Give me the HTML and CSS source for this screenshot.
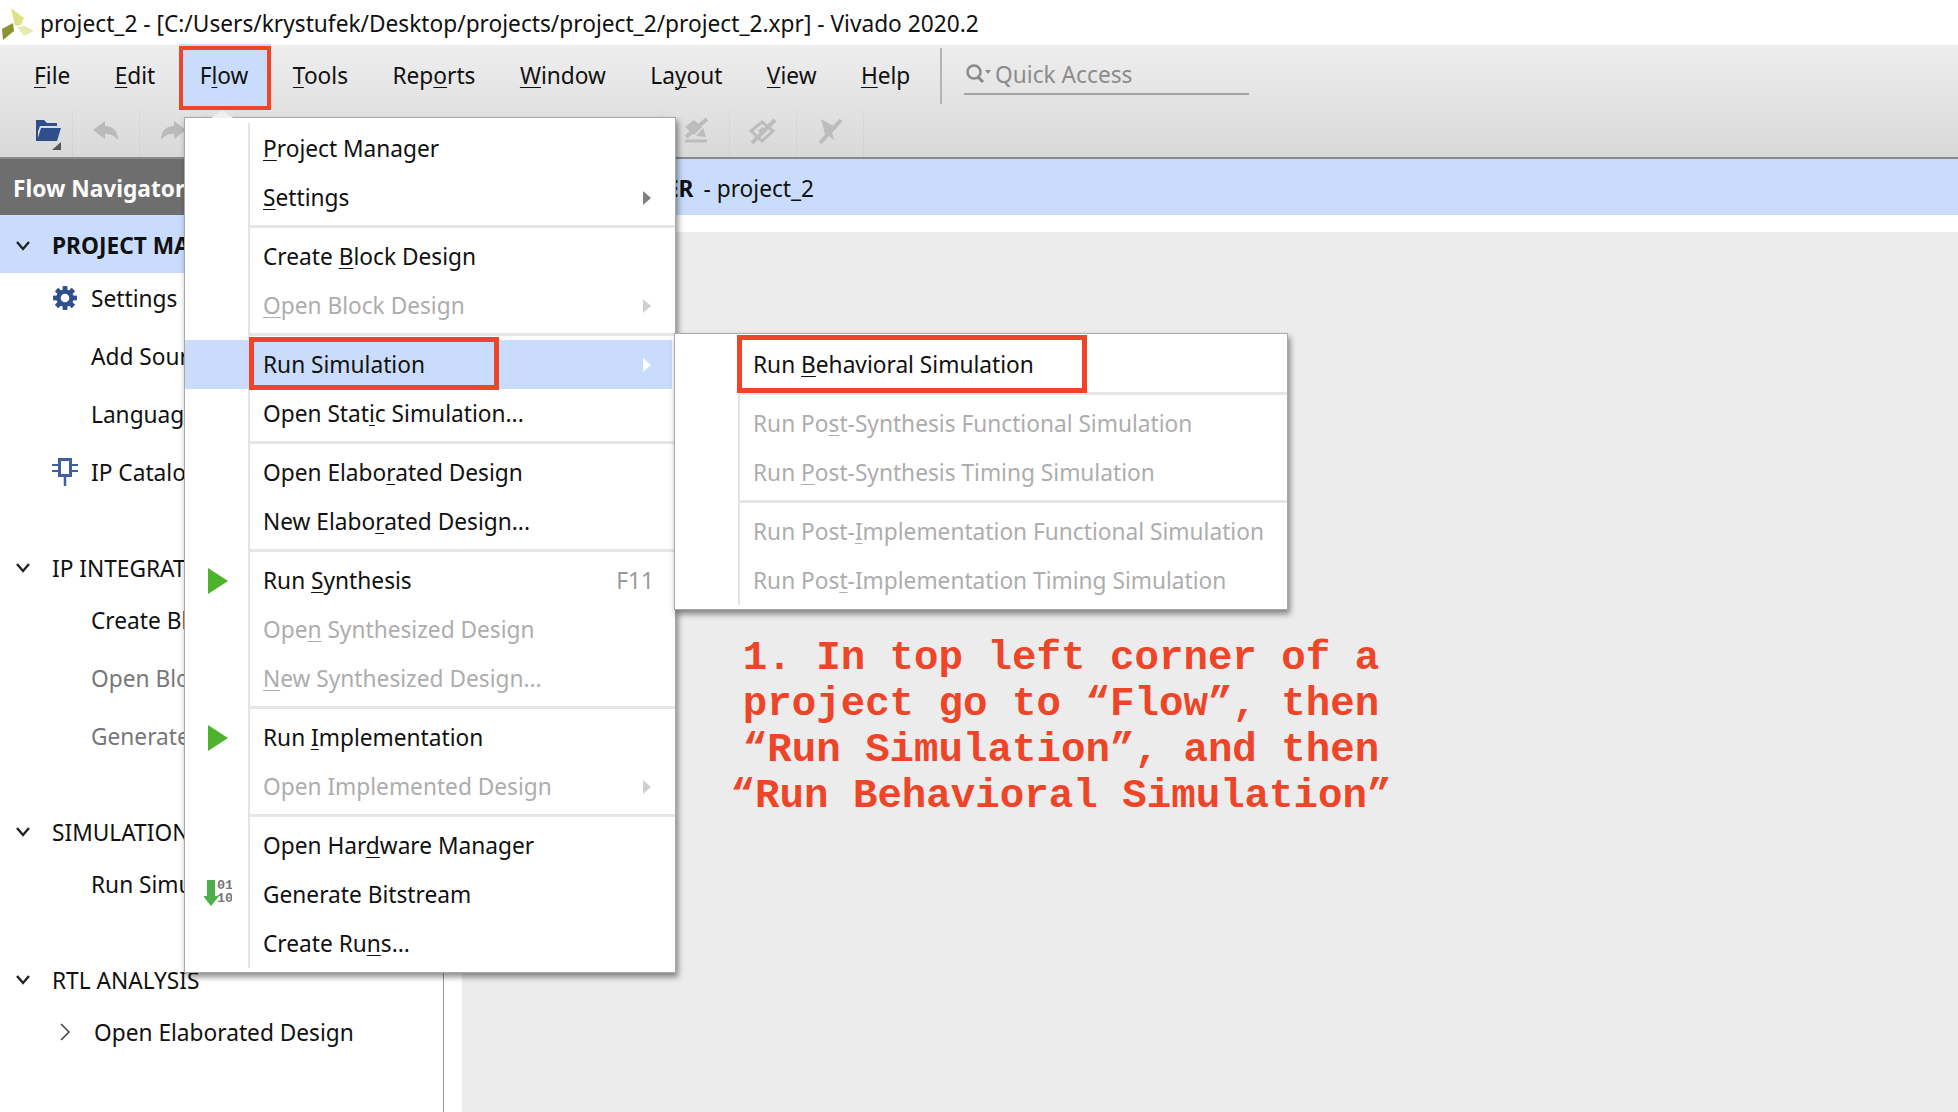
FILE: index.html
```html
<!DOCTYPE html>
<html lang="en">
<head>
<meta charset="UTF-8">
<title>Vivado</title>
<link rel="stylesheet" href="styles.css">
</head>
<body>

<div class="titlebar">
  <svg class="logo" width="34" height="40" viewBox="0 0 34 40">
    <path d="M11 5 L24 15 L21 22 L15 23 Z" fill="#dfe186"/>
    <path d="M2 26 L13 20 L14 28 L3 37 Z" fill="#8d9230"/>
    <path d="M17 24 L25 23 L34 28 L24 33 Z" fill="#e7eaae"/>
  </svg>
  <span>project_2 - [C:/Users/krystufek/Desktop/projects/project_2/project_2.xpr] - Vivado 2020.2</span>
</div>

<div class="chrome">
  <div class="menubar">
    <span class="menu-item"><u>F</u>ile</span>
    <span class="menu-item"><u>E</u>dit</span>
    <span class="menu-item active">F<u>l</u>ow</span>
    <span class="menu-item"><u>T</u>ools</span>
    <span class="menu-item">Rep<u>o</u>rts</span>
    <span class="menu-item"><u>W</u>indow</span>
    <span class="menu-item">La<u>y</u>out</span>
    <span class="menu-item"><u>V</u>iew</span>
    <span class="menu-item"><u>H</u>elp</span>
    <span class="menu-sep"></span>
    <div class="quick">
      <svg width="30" height="24" viewBox="0 0 30 24">
        <circle cx="10" cy="10" r="6.5" fill="none" stroke="#8a8a8a" stroke-width="2.5"/>
        <path d="M14 15 L19 20" stroke="#8a8a8a" stroke-width="3"/>
        <path d="M21 8 H27 L24 12 Z" fill="#8a8a8a"/>
      </svg>
      <span>Quick Access</span>
    </div>
  </div>
  <div class="toolbar">
    <div class="tool tool-first">
      <svg width="30" height="34" viewBox="0 0 30 34">
        <path d="M3 3 H11 L14 6 H24 V9 H7 L3 20 Z" fill="#2f4f8c"/>
        <path d="M3 3 V24 H5 V3 Z" fill="#2f4f8c"/>
        <path d="M8 11 H28 L24 24 H4 Z" fill="#2f4f8c"/>
        <path d="M28 33 V25 L19 33 Z" fill="#555"/>
      </svg>
    </div>
    <div class="tool">
      <svg width="28" height="24" viewBox="0 0 28 24">
        <path d="M1 11 L13 2 V7 C21 7 26 12 26 21 C22 16 19 15 13 15 V20 Z" fill="#bababa"/>
      </svg>
    </div>
    <div class="tool">
      <svg width="28" height="24" viewBox="0 0 28 24">
        <path d="M27 11 L15 2 V7 C7 7 2 12 2 21 C6 16 9 15 15 15 V20 Z" fill="#bababa"/>
      </svg>
    </div>
    <div class="tool-gap"></div>
    <div class="tool">
      <svg width="28" height="28" viewBox="0 0 28 28">
        <path d="M3 10 L12 3 L20 10 L12 18 Z" fill="#bcbcbc"/>
        <path d="M4 20 L25 2" stroke="#bcbcbc" stroke-width="4"/>
        <path d="M14 19 L21 11 L24 20 Z" fill="#bcbcbc"/>
        <path d="M3 24 H25" stroke="#bcbcbc" stroke-width="3"/>
      </svg>
    </div>
    <div class="tool">
      <svg width="28" height="28" viewBox="0 0 28 28">
        <path d="M2 14 L13 5 L24 14 L13 24 Z" fill="none" stroke="#bcbcbc" stroke-width="3"/>
        <path d="M3 26 L26 3" stroke="#bcbcbc" stroke-width="4"/>
        <path d="M9 14 L13 10 L18 14 L13 18 Z" fill="#bcbcbc"/>
      </svg>
    </div>
    <div class="tool">
      <svg width="28" height="28" viewBox="0 0 28 28">
        <path d="M5 2 L21 11 L16 15 L18 23 L13 19 L9 17 Z" fill="#bcbcbc"/>
        <path d="M4 26 L25 3" stroke="#bcbcbc" stroke-width="4"/>
      </svg>
    </div>
  </div>
</div>

<div class="workspace">
  <div class="sidebar">
    <div class="nav">
      <div class="nav-title">Flow Navigator</div>

      <div class="section">
        <div class="section-head current">
          <svg class="chev" width="16" height="10" viewBox="0 0 16 10"><path d="M2 1 L8 8 L14 1" fill="none" stroke="#222" stroke-width="2.4"/></svg>
          <span>PROJECT MANAGER</span>
        </div>
        <div class="nav-item">
          <span class="nav-icon">
            <svg width="26" height="26" viewBox="0 0 24 24">
              <g stroke="#2f4f8c" stroke-width="4.4">
                <path d="M12 1 V23"/><path d="M1 12 H23"/><path d="M4.2 4.2 L19.8 19.8"/><path d="M4.2 19.8 L19.8 4.2"/>
              </g>
              <circle cx="12" cy="12" r="8" fill="#2f4f8c"/>
              <circle cx="12" cy="12" r="4" fill="#fff"/>
            </svg>
          </span>
          <span>Settings</span>
        </div>
        <div class="nav-item"><span class="nav-icon"></span><span>Add Sources</span></div>
        <div class="nav-item"><span class="nav-icon"></span><span>Language Templates</span></div>
        <div class="nav-item">
          <span class="nav-icon">
            <svg width="26" height="28" viewBox="0 0 26 28">
              <rect x="7.5" y="1.5" width="11" height="16" fill="none" stroke="#3f5f9f" stroke-width="3"/>
              <path d="M0 7 H6 M0 13 H6 M20 7 H26 M20 13 H26" stroke="#3f5f9f" stroke-width="2"/>
              <path d="M13 19 V28" stroke="#3f5f9f" stroke-width="2.5"/>
            </svg>
          </span>
          <span>IP Catalog</span>
        </div>
      </div>

      <div class="section">
        <div class="section-head">
          <svg class="chev" width="16" height="10" viewBox="0 0 16 10"><path d="M2 1 L8 8 L14 1" fill="none" stroke="#222" stroke-width="2.4"/></svg>
          <span>IP INTEGRATOR</span>
        </div>
        <div class="nav-item"><span class="nav-icon"></span><span>Create Block Design</span></div>
        <div class="nav-item off"><span class="nav-icon"></span><span>Open Block Design</span></div>
        <div class="nav-item off"><span class="nav-icon"></span><span>Generate Block Design</span></div>
      </div>

      <div class="section">
        <div class="section-head">
          <svg class="chev" width="16" height="10" viewBox="0 0 16 10"><path d="M2 1 L8 8 L14 1" fill="none" stroke="#222" stroke-width="2.4"/></svg>
          <span>SIMULATION</span>
        </div>
        <div class="nav-item"><span class="nav-icon"></span><span>Run Simulation</span></div>
      </div>

      <div class="section">
        <div class="section-head">
          <svg class="chev" width="16" height="10" viewBox="0 0 16 10"><path d="M2 1 L8 8 L14 1" fill="none" stroke="#222" stroke-width="2.4"/></svg>
          <span>RTL ANALYSIS</span>
        </div>
        <div class="nav-item sub">
          <svg class="nav-arrow" width="10" height="18" viewBox="0 0 10 18"><path d="M1 1 L9 9 L1 17" fill="none" stroke="#333" stroke-width="1.4"/></svg>
          <span>Open Elaborated Design</span>
        </div>
      </div>
    </div>
  </div>

  <div class="main">
    <div class="main-head"><b>PROJECT MANAGER</b> - project_2</div>
    <div class="main-strip"></div>
  </div>
</div>

<!-- flow menu -->
<div class="menu flow-menu">
  <div class="row"><span class="gutter"></span><span class="label"><u>P</u>roject Manager</span></div>
  <div class="row"><span class="gutter"></span><span class="label"><u>S</u>ettings</span><i class="arrow"></i></div>
  <div class="sep"></div>
  <div class="row"><span class="gutter"></span><span class="label">Create <u>B</u>lock Design</span></div>
  <div class="row off"><span class="gutter"></span><span class="label"><u>O</u>pen Block Design</span><i class="arrow"></i></div>
  <div class="sep"></div>
  <div class="row hover"><span class="gutter"></span><span class="label">Run Simulation</span><i class="arrow"></i><span class="mark mark-sim"></span></div>
  <div class="row"><span class="gutter"></span><span class="label">Open Stat<u>i</u>c Simulation...</span></div>
  <div class="sep"></div>
  <div class="row"><span class="gutter"></span><span class="label">Open Elabo<u>r</u>ated Design</span></div>
  <div class="row"><span class="gutter"></span><span class="label">New Elabo<u>r</u>ated Design...</span></div>
  <div class="sep"></div>
  <div class="row">
    <span class="gutter"><svg class="play" width="20" height="26" viewBox="0 0 20 26"><path d="M0 0 L20 13 L0 26 Z" fill="#4cb32b"/></svg></span>
    <span class="label">Run <u>S</u>ynthesis</span><span class="key">F11</span>
  </div>
  <div class="row off"><span class="gutter"></span><span class="label">Ope<u>n</u> Synthesized Design</span></div>
  <div class="row off"><span class="gutter"></span><span class="label"><u>N</u>ew Synthesized Design...</span></div>
  <div class="sep"></div>
  <div class="row">
    <span class="gutter"><svg class="play" width="20" height="26" viewBox="0 0 20 26"><path d="M0 0 L20 13 L0 26 Z" fill="#4cb32b"/></svg></span>
    <span class="label">Run <u>I</u>mplementation</span>
  </div>
  <div class="row off"><span class="gutter"></span><span class="label">Open Implemented Design</span><i class="arrow"></i></div>
  <div class="sep"></div>
  <div class="row"><span class="gutter"></span><span class="label">Open Har<u>d</u>ware Manager</span></div>
  <div class="row">
    <span class="gutter">
      <svg class="bitstream" width="28" height="28" viewBox="0 0 28 28">
        <path d="M3 1 H11 V17 H15 L7 27 L-1 17 H3 Z" fill="#4cae4c"/>
        <text class="bits" x="13" y="10">01</text>
        <text class="bits" x="13" y="23">10</text>
      </svg>
    </span>
    <span class="label">Generate Bitstream</span>
  </div>
  <div class="row"><span class="gutter"></span><span class="label">Create Ru<u>n</u>s...</span></div>
</div>

<!-- run simulation submenu -->
<div class="menu sim-menu">
  <div class="row"><span class="gutter"></span><span class="label">Run <u>B</u>ehavioral Simulation</span><span class="mark mark-beh"></span></div>
  <div class="sep"></div>
  <div class="row off"><span class="gutter"></span><span class="label">Run Po<u>s</u>t-Synthesis Functional Simulation</span></div>
  <div class="row off"><span class="gutter"></span><span class="label">Run <u>P</u>ost-Synthesis Timing Simulation</span></div>
  <div class="sep"></div>
  <div class="row off"><span class="gutter"></span><span class="label">Run Post-<u>I</u>mplementation Functional Simulation</span></div>
  <div class="row off"><span class="gutter"></span><span class="label">Run Pos<u>t</u>-Implementation Timing Simulation</span></div>
</div>

<div class="note">1. In top left corner of a<br>project go to “Flow”, then<br>“Run Simulation”, and then<br>“Run Behavioral Simulation”</div>

</body>
</html>
```

FILE: styles.css
```css
*{
  box-sizing: border-box;
}

html, body{
  margin: 0;
  height: 1112px;
  overflow: hidden;
}

body{
  position: relative;
  display: flex;
  flex-direction: column;
  background: #fff;
  color: #111;
  font-family: "Noto Sans", "Open Sans", sans-serif;
  font-size: 22.7px;
}

u{
  text-underline-offset: 3px;
  text-decoration-thickness: 1px;
}

.titlebar{
  height: 45px;
  padding-top: 1px;
  display: flex;
  align-items: center;
  background: #fff;
}

.logo{
  margin-right: 6px;
  flex: none;
}

.chrome{
  height: 114px;
  background: linear-gradient(#eeeeee, #d9d9d9);
  border-bottom: 2px solid #8a8a8a;
}

.menubar{
  position: relative;
  z-index: 0;
  height: 65px;
  display: flex;
  align-items: center;
  gap: 44.4px;
  padding-left: 34px;
}

.menu-item{
  position: relative;
  top: -2px;
}

.menu-item.active::before{
  content: "";
  position: absolute;
  z-index: -1;
  left: -21px;
  right: -23px;
  top: -14px;
  bottom: -19px;
  background: #c9dcfc;
  border: 4px solid #ee4528;
  box-shadow: 0 -2px 0 #c9dcfc;
}

.menu-sep{
  width: 2px;
  height: 56px;
  margin-left: -15px;
  margin-bottom: 4px;
  background: #b4b4b4;
}

.quick{
  width: 285px;
  height: 44px;
  margin-left: -22px;
  margin-bottom: 9px;
  padding-top: 4px;
  display: flex;
  align-items: center;
  gap: 1px;
  color: #8c8c8c;
  border-bottom: 2px solid #a3a3a3;
}

.toolbar{
  height: 47px;
  display: flex;
}

.tool{
  width: 67px;
  padding-bottom: 5px;
  display: flex;
  align-items: center;
  justify-content: center;
  border-right: 1px solid rgba(0, 0, 0, .04);
}

.tool-first{
  width: 73px;
  padding-left: 24px;
  padding-bottom: 0;
}

.tool-gap{
  width: 456px;
  border-right: 1px solid rgba(0, 0, 0, .04);
}

.workspace{
  flex: 1;
  display: flex;
  min-height: 0;
}

.sidebar{
  width: 462px;
  flex: none;
  background: #fff;
}

.nav{
  width: 444px;
  height: 100%;
  border-right: 1px solid #999;
}

.nav-title{
  height: 56px;
  padding-left: 13px;
  padding-top: 2px;
  display: flex;
  align-items: center;
  background: #6e6e6e;
  color: #fff;
  font-weight: 700;
}

.section{
  margin-bottom: 44px;
}

.section-head{
  height: 46px;
  padding-bottom: 2px;
  display: flex;
  align-items: center;
  gap: 21px;
  padding-left: 15px;
}

.section-head.current{
  height: 58px;
  margin-bottom: -3px;
  padding-top: 3px;
  padding-bottom: 0;
  background: #c9dcfc;
  font-weight: 700;
}

.chev{
  flex: none;
}

.nav-item{
  height: 58px;
  padding-bottom: 2px;
  display: flex;
  align-items: center;
  padding-left: 52px;
}

.nav-item.off{
  color: #777;
}

.nav-item.sub{
  padding-left: 60px;
  gap: 24px;
}

.nav-icon{
  width: 39px;
  flex: none;
  display: flex;
  align-items: center;
}

.main{
  flex: 1;
  background: #ececec;
}

.main-head{
  height: 56px;
  padding-left: 16px;
  padding-top: 2px;
  display: flex;
  align-items: center;
  gap: 10px;
  background: #c9dcfc;
}

.main-strip{
  height: 17px;
  background: #fff;
}

/* popup menus */
.menu{
  position: absolute;
  padding: 6px 0 4px;
  background: #fff linear-gradient(#e4e4e4, #e4e4e4) no-repeat 63px 5px / 2px calc(100% - 9px);
  box-shadow: 0 0 0 1px #a8a8a8, 2px 4px 6px 1px rgba(0, 0, 0, .45);
}

.flow-menu{
  left: 185px;
  top: 118px;
  width: 490px;
}

/* caret pointing at the Flow item */
.flow-menu::before{
  content: "";
  position: absolute;
  left: 26px;
  top: -8px;
  border-left: 11px solid transparent;
  border-right: 11px solid transparent;
  border-bottom: 8px solid #efefef;
}

.sim-menu{
  left: 675px;
  top: 334px;
  width: 612px;
}

.row{
  position: relative;
  height: 49px;
  display: flex;
  align-items: center;
}

.row.off{
  color: #adadad;
}

.row.hover{
  background: #c9dcfc;
  margin-right: 3px;
}

.gutter{
  width: 65px;
  flex: none;
  padding-right: 2px;
  display: flex;
  align-items: center;
  justify-content: center;
}

.play{
  margin-left: 2px;
}

.bitstream{
  margin-left: 3px;
  margin-bottom: 3px;
}

.label{
  flex: 1;
  padding-left: 13px;
  white-space: nowrap;
}

.key{
  margin-right: 21px;
  color: #999;
}

.arrow{
  width: 0;
  height: 0;
  margin-right: 24px;
  border-left: 8px solid #808080;
  border-top: 7px solid transparent;
  border-bottom: 7px solid transparent;
}

.row.off .arrow{
  border-left-color: #cfcfcf;
}

.row.hover .arrow{
  margin-right: 21px;
  border-left-color: #fff;
}

.sep{
  height: 3px;
  margin: 3px 0 4px 65px;
  background: #e6e6e6;
}

.bits{
  font-family: "Liberation Mono", monospace;
  font-size: 13.5px;
  font-weight: 700;
  fill: #777;
}

/* red annotation boxes */
.mark{
  position: absolute;
  border: 5px solid #ee4528;
}

.mark-sim{
  left: 64px;
  width: 250px;
  top: -3px;
  height: 53px;
}

.mark-beh{
  left: 62px;
  width: 350px;
  top: -5px;
  height: 58px;
}

.note{
  position: absolute;
  left: 661px;
  top: 635px;
  width: 800px;
  text-align: center;
  color: #ee4528;
  font-family: "Liberation Mono", monospace;
  font-size: 40.8px;
  font-weight: 700;
  line-height: 46px;
}
```
